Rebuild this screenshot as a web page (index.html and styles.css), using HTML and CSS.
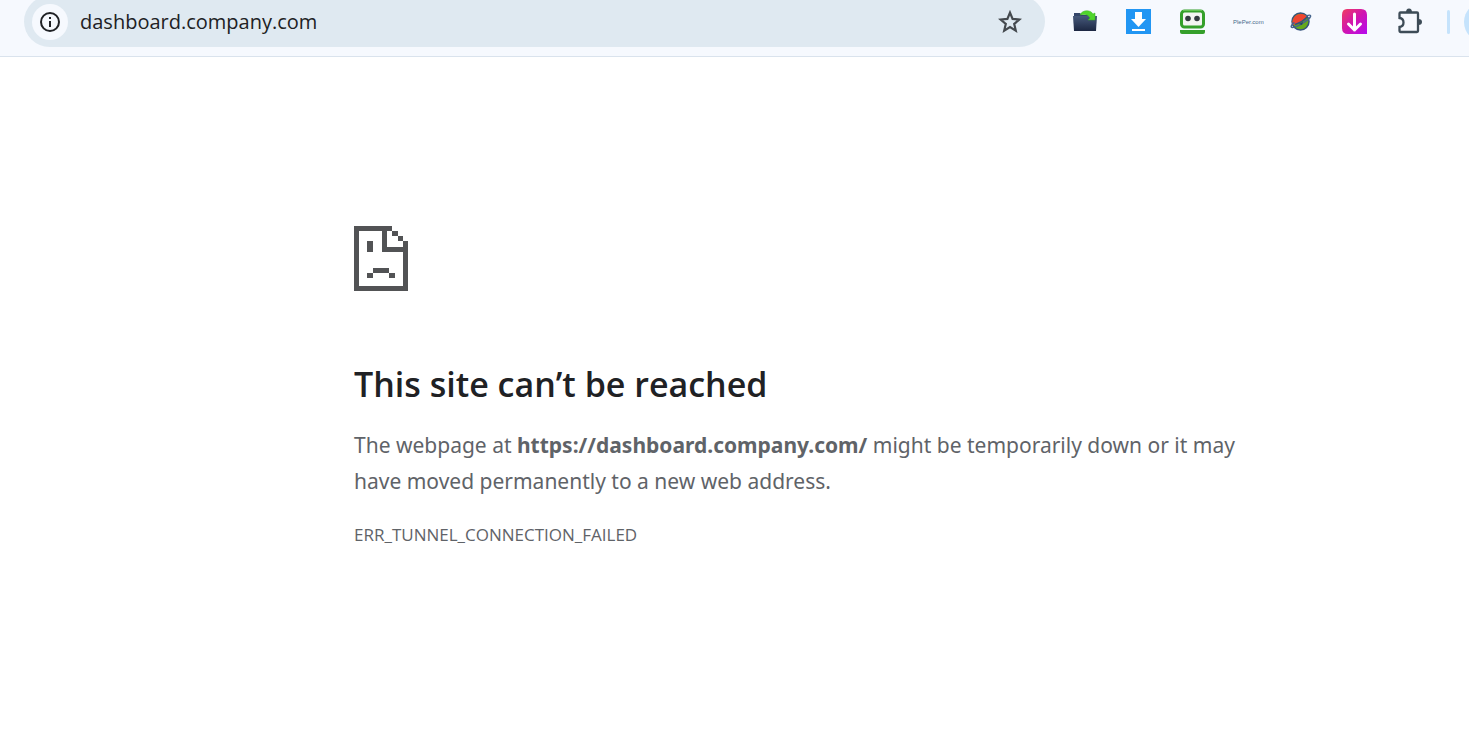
FILE: index.html
```html
<!DOCTYPE html>
<html lang="en">
<head>
    <meta charset="UTF-8">
    <meta name="viewport" content="width=device-width, initial-scale=1.0">
    <title>dashboard.company.com</title>
    <link rel="stylesheet" href="styles.css">
</head>
<body>

    <header class="toolbar">
        <form class="omnibox">
            <button type="button" class="site-info" aria-label="View site information">
                <svg width="22" height="22" viewBox="0 0 22 22">
                    <circle cx="11" cy="11" r="9" fill="none" stroke="#1f2125" stroke-width="2"/>
                    <path d="M10 6h2v2h-2zM10 10h2v6h-2z" fill="#1f2125"/>
                </svg>
            </button>
            <input type="text" class="url" value="dashboard.company.com" aria-label="Address" spellcheck="false">
            <button type="button" class="star" aria-label="Bookmark this tab">
                <svg width="24" height="24" viewBox="0 0 24 24">
                    <path d="M12 2.6l2.6 6.3 6.8.6-5.2 4.4 1.6 6.7-5.8-3.5-5.8 3.5 1.6-6.7-5.2-4.4 6.8-.6z" fill="none" stroke="#44494e" stroke-width="2.2"/>
                </svg>
            </button>
        </form>

        <nav class="extensions" aria-label="Extensions">
            <button type="button" class="ext" aria-label="Folder">
                <svg width="28" height="28" viewBox="0 0 28 28">
                    <defs>
                        <linearGradient id="folder" x1="0" y1="0" x2="0" y2="1">
                            <stop offset="0" stop-color="#46597b"/>
                            <stop offset="1" stop-color="#1c2742"/>
                        </linearGradient>
                    </defs>
                    <path d="M3 5h6l2 2h13v15H3z" fill="#34466a"/>
                    <path d="M2 8h24l-1 15H3z" fill="url(#folder)"/>
                    <path d="M9 7c2-5 10-6 13-1l2-1v7h-7l2-2c-2-4-6-4-10-3z" fill="#4fd52b" stroke="#36b31d" stroke-width=".5"/>
                </svg>
            </button>
            <button type="button" class="ext" aria-label="Downloader">
                <svg width="28" height="28" viewBox="0 0 28 28">
                    <path d="M1 1h25v25H1z" fill="#2196f3"/>
                    <path d="M10 4h7v7h4l-7.500 8L6 11h4z" fill="#fff"/>
                    <path d="M7 21h13v2H7z" fill="#fff"/>
                </svg>
            </button>
            <button type="button" class="ext" aria-label="Password manager">
                <svg width="28" height="28" viewBox="0 0 28 28">
                    <rect x="2.500" y="3" width="22" height="16" rx="3" fill="#f4f5f2" stroke="#35a02b" stroke-width="3"/>
                    <circle cx="9" cy="10.500" r="2.800" fill="#343b40"/>
                    <circle cx="18" cy="10.500" r="2.800" fill="#343b40"/>
                    <path d="M1 22h25v2q0 2-2 2H3q-2 0-2-2z" fill="#35a02b"/>
                    <path d="M4 2.500h19" stroke="#63c452"/>
                </svg>
            </button>
            <button type="button" class="ext ext-text">PlePer.com</button>
            <button type="button" class="ext" aria-label="Planet">
                <svg width="28" height="28" viewBox="0 0 28 28">
                    <circle cx="13.500" cy="13.500" r="8.500" fill="#65a91b" stroke="#34527c" stroke-width="1.500"/>
                    <path d="M5.800 17A8.500 8.500 0 0 1 20 8.500Q15 15 5.800 17z" fill="#ee4630"/>
                    <path d="M8 16.500Q16 14 20.500 8.500" fill="none" stroke="#34527c" stroke-width="1.500"/>
                    <path d="M19 8q4-1.500 4.500-.5 1 2-6 6.500-7 5-12 5.500-2 0-1-2 1-2 3-3" fill="none" stroke="#46658d" stroke-width="1.500"/>
                    <path d="M12 16l4-2-1 3z" fill="#24406a"/>
                </svg>
            </button>
            <button type="button" class="ext" aria-label="Video downloader">
                <svg width="28" height="28" viewBox="0 0 28 28">
                    <defs>
                        <linearGradient id="pink" x1="0" y1="0" x2="1" y2="1">
                            <stop offset="0" stop-color="#f03e60"/>
                            <stop offset=".5" stop-color="#d015b0"/>
                            <stop offset="1" stop-color="#b50af0"/>
                        </linearGradient>
                    </defs>
                    <path d="M6 1h14q6 0 6 6v19H7q-6 0-6-6V7q0-6 5-6z" fill="url(#pink)"/>
                    <path d="M13.500 6v16M7.500 16l6 6 6-6" fill="none" stroke="#fff" stroke-width="3" stroke-linecap="round" stroke-linejoin="round"/>
                </svg>
            </button>
            <button type="button" class="ext" aria-label="Extensions">
                <svg width="28" height="28" viewBox="0 0 28 28">
                    <path d="M5.500 4.500h16.500q1 0 1 1v17.500q0 1-1 1H5.500q-1 0-1-1v-4q4-.5 4-4.500t-4-4.500V5.500q0-1 1-1z" fill="none" stroke="#3d4c57" stroke-width="2.300"/>
                    <path d="M11 4.500q0-4 3-4t3 4zM23.500 11q3.500 0 3.500 3t-3.500 3z" fill="#3d4c57"/>
                </svg>
            </button>
        </nav>

        <span class="divider"></span>
        <button type="button" class="profile" aria-label="Profile"></button>
    </header>

    <main class="error-page">
        <svg class="error-icon" width="54" height="66" viewBox="0 0 162 198" shape-rendering="crispEdges" aria-hidden="true">
            <g fill="#525355">
                <path d="M0 3h114v15H99v48h48V48h15v150H0zM15 18v165h132V81H84V18z" fill-rule="evenodd"/>
                <path d="M114 18h18v15h-18zM132 33h15v15h-15z"/>
                <path d="M39 48h18v33H39z"/>
                <path d="M57 129h48v15H57zM39 144h18v15H39zM105 144h18v15h-18z"/>
            </g>
        </svg>
        <h1>This site can’t be reached</h1>
        <p class="summary">The webpage at <strong>https://dashboard.company.com/</strong> might be temporarily down or it may have moved permanently to a new web address.</p>
        <div class="error-code">ERR_TUNNEL_CONNECTION_FAILED</div>
    </main>

</body>
</html>
```
FILE: styles.css
```css
:root {
    --bar: #f6f9fe; --field: #dfe9f1; --line: #dae3ed;
    --blue: #c5e3fc; --text: #202124; --muted: #5f6368;
}
* { box-sizing: border-box; }
body { background: #fff; color: var(--muted); font-family: "Segoe UI", "Open Sans", "Noto Sans", sans-serif; margin: 0; }
button { background: none; border: none; padding: 0; flex: none; cursor: pointer; }
svg { display: block; }

/* browser bar */
.toolbar { background: var(--bar); border-bottom: 1px solid var(--line); height: 57px; padding-left: 24px; display: flex; align-items: flex-start; overflow: hidden; }
.omnibox { background: var(--field); flex: 1; min-width: 0; height: 51px; margin-top: -4px; padding: 0 23px 0 8px; border-radius: 26px; display: flex; align-items: center; }
.site-info { background: var(--bar); width: 36px; height: 36px; border-radius: 50%; display: flex; align-items: center; justify-content: center; }
.url { flex: 1; min-width: 0; height: 36px; margin-left: 12px; padding: 0; border: none; outline: none; background: none; color: var(--text); font-family: inherit; font-size: 20px; }
.extensions { display: flex; gap: 26px; margin: 8px 24px 0 26px; }
.ext { width: 28px; height: 28px; }
.ext-text { color: #46698a; font-family: "Liberation Sans Narrow", "Liberation Sans", sans-serif; font-size: 6px; white-space: nowrap; }
.divider { background: var(--blue); flex: none; width: 3px; height: 24px; margin-top: 10px; border-radius: 2px; }
.profile { background: var(--blue); width: 40px; height: 40px; margin: 2px -35px 0 14px; border-radius: 50%; }

/* error message */
.error-page { max-width: 1254px; padding: 168px 0 0 354px; }
h1 { color: var(--text); font-size: 34px; font-weight: 600; line-height: 44px; margin: 71px 0 21px; }
.summary { font-family: "Segoe UI", "Noto Sans", sans-serif; font-size: 21px; line-height: 36px; margin: 0; }
.error-code { font-size: 17px; line-height: 24px; margin-top: 24px; }
```
